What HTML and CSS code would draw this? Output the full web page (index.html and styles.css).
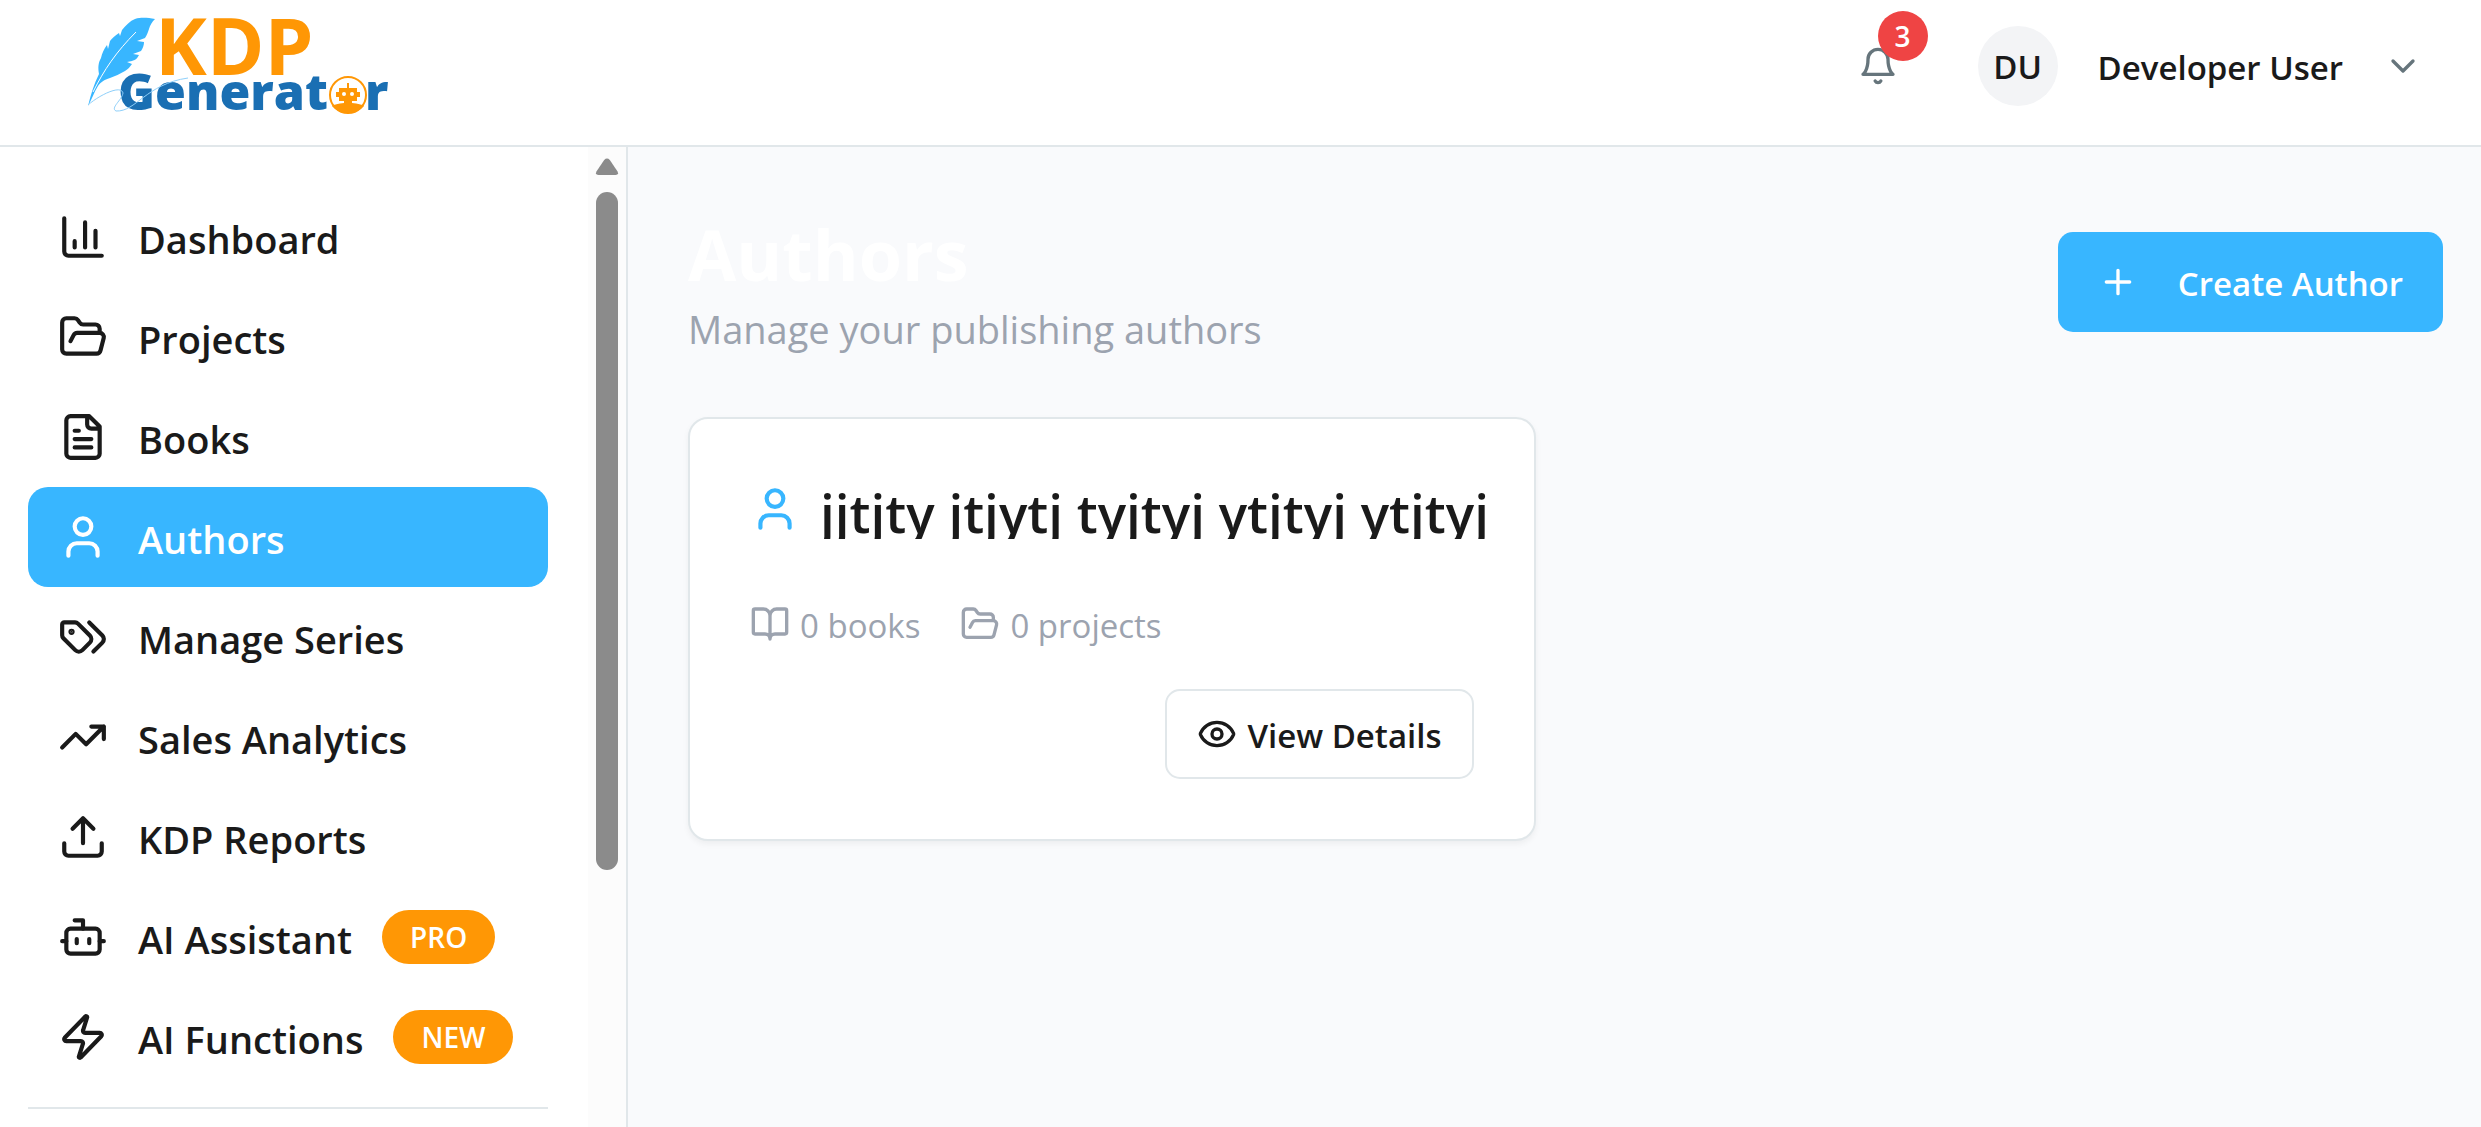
FILE: index.html
```html
<!DOCTYPE html>
<html lang="en">
<head>
<meta charset="utf-8">
<title>Authors - KDP Generator</title>
<link rel="stylesheet" href="styles.css">
</head>
<body>
<svg class="sprite" aria-hidden="true">
  <symbol id="i-chart" viewBox="0 0 24 24"><path d="M3 3v16a2 2 0 0 0 2 2h16M18 17V9M13 17V5M8 17v-3"/></symbol>
  <symbol id="i-folder" viewBox="0 0 24 24"><path d="m6 14 1.5-2.9A2 2 0 0 1 9.24 10H20a2 2 0 0 1 1.94 2.5l-1.54 6a2 2 0 0 1-1.95 1.5H4a2 2 0 0 1-2-2V5a2 2 0 0 1 2-2h3.9a2 2 0 0 1 1.69.9l.81 1.2a2 2 0 0 0 1.67.9H18a2 2 0 0 1 2 2v2"/></symbol>
  <symbol id="i-file" viewBox="0 0 24 24"><path d="M15 2H6a2 2 0 0 0-2 2v16a2 2 0 0 0 2 2h12a2 2 0 0 0 2-2V7ZM14 2v4a2 2 0 0 0 2 2h4M10 9H8M16 13H8M16 17H8"/></symbol>
  <symbol id="i-user" viewBox="0 0 24 24"><path d="M19 21v-2a4 4 0 0 0-4-4H9a4 4 0 0 0-4 4v2"/><circle cx="12" cy="7" r="4"/></symbol>
  <symbol id="i-tags" viewBox="0 0 24 24"><path d="m15 5 6.3 6.3a2.4 2.4 0 0 1 0 3.4L17 19M9.586 5.586A2 2 0 0 0 8.172 5H3a1 1 0 0 0-1 1v5.172a2 2 0 0 0 .586 1.414L8.29 18.29a2.426 2.426 0 0 0 3.42 0l3.58-3.58a2.426 2.426 0 0 0 0-3.42z"/><circle cx="6.5" cy="9.5" r=".5" fill="currentColor"/></symbol>
  <symbol id="i-trend" viewBox="0 0 24 24"><path d="M22 7l-8.500 8.500-5-5L2 17M16 7h6v6"/></symbol>
  <symbol id="i-upload" viewBox="0 0 24 24"><path d="M21 15v4a2 2 0 0 1-2 2H5a2 2 0 0 1-2-2v-4M17 8l-5-5-5 5M12 3v12"/></symbol>
  <symbol id="i-bot" viewBox="0 0 24 24"><path d="M12 8V4H8M2 14h2M20 14h2M15 13v2M9 13v2"/><rect x="4" y="8" width="16" height="12" rx="2"/></symbol>
  <symbol id="i-zap" viewBox="0 0 24 24"><path d="M4 14a1 1 0 0 1-.78-1.63l9.9-10.2a.5.5 0 0 1 .86.46l-1.92 6.02A1 1 0 0 0 13 10h7a1 1 0 0 1 .78 1.63l-9.900 10.2a.5.5 0 0 1-.86-.46l1.92-6.02A1 1 0 0 0 11 14z"/></symbol>
  <symbol id="i-bell" viewBox="0 0 24 24"><path d="M6 8a6 6 0 0 1 12 0c0 7 3 9 3 9H3s3-2 3-9M10.300 21a1.940 1.940 0 0 0 3.400 0"/></symbol>
  <symbol id="i-chevron" viewBox="0 0 24 24"><path d="m6 9 6 6 6-6"/></symbol>
  <symbol id="i-plus" viewBox="0 0 24 24"><path d="M5 12h14M12 5v14"/></symbol>
  <symbol id="i-book" viewBox="0 0 24 24"><path d="M12 7v14M3 18a1 1 0 0 1-1-1V4a1 1 0 0 1 1-1h5a4 4 0 0 1 4 4 4 4 0 0 1 4-4h5a1 1 0 0 1 1 1v13a1 1 0 0 1-1 1h-6a3 3 0 0 0-3 3 3 3 0 0 0-3-3z"/></symbol>
  <symbol id="i-eye" viewBox="0 0 24 24"><path d="M2.062 12.348a1 1 0 0 1 0-.696 10.750 10.750 0 0 1 19.876 0 1 1 0 0 1 0 .696 10.750 10.750 0 0 1-19.876 0"/><circle cx="12" cy="12" r="3"/></symbol>
</svg>

<div class="app">
  <header class="topbar">
    <a class="brand" href="#" aria-label="KDP Generator">
      <svg class="logo" viewBox="0 0 310 108" role="img" aria-label="KDP Generator">
        <path class="logo-feather" d="M4 94C7 82 10 72 15 62C14 56 14 51 17 46C18 41 20 37 23 33L24 37L26 29C28 26 31 24 35 21L36 24L38 18C42 13 46 9 51 7C58 5 64 6 71 7C68 10 66 13 65 17C64 20 63 23 61 26L53 29L60 30C60 33 59 36 57 39L49 42L55 43C53 47 51 48 48 49L43 50L48 52C46 55 44 57 41 59C36 62 31 64 26 66C20 68 17 70 14 74C10 80 8 87 4 94Z"/>
        <path class="logo-quill" d="M9 80C20 58 32 40 52 20"/>
        <text class="logo-kdp" x="71" y="63">KDP</text>
        <text class="logo-gen" x="34" y="98">Generat</text>
        <text class="logo-gen" x="281" y="98">r</text>
        <path class="logo-swirl" d="M4 93C14 84 37 72 39 81C38 88 26 96 32 99C52 100 62 72 104 66"/>
        <circle class="logo-ring" cx="264" cy="83" r="18"/>
        <path class="logo-bot" d="M263 71h2v5h8v4h3v5h-3v4h-5v2q9 1 12 3q-6 7-16 7t-16-7q3-2 12-3v-2h-5v-4h-3v-5h3v-4h8z"/>
        <circle class="logo-eye" cx="260" cy="82" r="2"/><circle class="logo-eye" cx="268" cy="82" r="2"/>
      </svg>
    </a>
    <div class="account">
      <button class="bell" type="button" aria-label="Notifications"><svg class="icon-sm"><use href="#i-bell"/></svg><span class="count">3</span></button>
      <button class="profile" type="button"><span class="avatar">DU</span><span class="label">Developer User</span><svg class="icon-sm muted"><use href="#i-chevron"/></svg></button>
    </div>
  </header>

  <div class="body">
    <aside class="sidebar">
      <nav class="menu">
        <a class="item" href="#"><svg class="icon"><use href="#i-chart"/></svg><span class="label">Dashboard</span></a>
        <a class="item" href="#"><svg class="icon"><use href="#i-folder"/></svg><span class="label">Projects</span></a>
        <a class="item" href="#"><svg class="icon"><use href="#i-file"/></svg><span class="label">Books</span></a>
        <a class="item active" href="#" aria-current="page"><svg class="icon"><use href="#i-user"/></svg><span class="label">Authors</span></a>
        <a class="item" href="#"><svg class="icon"><use href="#i-tags"/></svg><span class="label">Manage Series</span></a>
        <a class="item" href="#"><svg class="icon"><use href="#i-trend"/></svg><span class="label">Sales Analytics</span></a>
        <a class="item" href="#"><svg class="icon"><use href="#i-upload"/></svg><span class="label">KDP Reports</span></a>
        <a class="item" href="#"><svg class="icon"><use href="#i-bot"/></svg><span class="label">AI Assistant</span><span class="tag">PRO</span></a>
        <a class="item" href="#"><svg class="icon"><use href="#i-zap"/></svg><span class="label">AI Functions</span><span class="tag">NEW</span></a>
        <hr class="rule">
      </nav>
      <div class="scrollbar" aria-hidden="true">
        <svg class="arrow" viewBox="0 0 24 18"><path d="M9 2q3-3 6 0l8 12q2 4-2 4H3q-4 0-2-4z"/></svg>
        <div class="thumb"></div>
      </div>
    </aside>

    <main class="main">
      <div class="page-head">
        <div>
          <h1 class="title">Authors</h1>
          <p class="subtitle">Manage your publishing authors</p>
        </div>
        <button class="create" type="button"><svg class="icon-sm"><use href="#i-plus"/></svg><span class="label">Create Author</span></button>
      </div>
      <div class="cards">
        <article class="card">
          <div class="card-head"><svg class="icon accent"><use href="#i-user"/></svg><h2 class="name">jjtjty jtjytj tyjtyj ytjtyj ytjtyj</h2></div>
          <div class="stats">
            <span class="stat"><svg class="icon-sm"><use href="#i-book"/></svg><span class="label">0 books</span></span>
            <span class="stat"><svg class="icon-sm"><use href="#i-folder"/></svg><span class="label">0 projects</span></span>
          </div>
          <button class="details" type="button"><svg class="icon-sm"><use href="#i-eye"/></svg><span class="label">View Details</span></button>
        </article>
      </div>
    </main>
  </div>
</div>
</body>
</html>
```
FILE: styles.css
```css
* { box-sizing: border-box; margin: 0; }

body {
  font-family: "Open Sans", sans-serif;
  font-size: 33px;
  line-height: 46px;
  color: #1a1a1a;
  background: #f9fafc;
}

a { color: inherit; text-decoration: none; }
button { font: inherit; color: inherit; border: 0; background: none; padding: 0; cursor: pointer; }

.sprite { position: absolute; width: 0; height: 0; }
.icon, .icon-sm {
  flex: none;
  fill: none;
  stroke: currentColor;
  stroke-width: 2;
  stroke-linecap: round;
  stroke-linejoin: round;
}
.icon { width: 50px; height: 50px; }
.icon-sm { width: 40px; height: 40px; }
.label { padding-top: 3px; white-space: nowrap; }
.muted { color: #66757c; }
.accent { color: #38b6ff; }

.app { display: flex; flex-direction: column; height: 100vh; overflow: hidden; }

/* Top bar */
.topbar {
  flex: none;
  display: flex;
  justify-content: space-between;
  align-items: center;
  padding: 12px 58px 25px 84px;
  background: #fff;
  border-bottom: 2px solid #e1e7ea;
}
.brand, .logo { display: block; }
.logo { width: 310px; height: 108px; overflow: visible; }
.logo-feather { fill: #38b6ff; }
.logo-quill { fill: none; stroke: #fff; stroke-width: 1; }
.logo-swirl { fill: none; stroke: #8fd0fa; stroke-width: 1; }
.logo-kdp { fill: #ff9705; font-size: 78px; font-weight: 700; }
.logo-gen { fill: #1a6fb3; font-size: 50px; font-weight: 800; }
.logo-ring { fill: #fff; stroke: #ff9705; stroke-width: 2; }
.logo-bot { fill: #ff9705; }
.logo-eye { fill: #fff; }

.account { display: flex; align-items: center; gap: 80px; }
.bell { position: relative; display: flex; color: #66757c; }
.count {
  position: absolute;
  left: 20px;
  bottom: 25px;
  width: 50px;
  border-radius: 25px;
  background: #ef4444;
  color: #fff;
  font-size: 28px;
  line-height: 50px;
  font-weight: 600;
  text-align: center;
}
.profile { display: flex; align-items: center; gap: 40px; font-weight: 600; }
.avatar { width: 80px; height: 80px; line-height: 82px; border-radius: 50%; background: #f3f4f6; text-align: center; }

.body { flex: 1; display: flex; min-height: 0; }

/* Sidebar */
.sidebar { flex: none; display: flex; width: 628px; background: #fff; border-right: 2px solid #e1e7ea; }
.menu { flex: 1; padding: 40px 40px 0 28px; overflow: hidden; }
.item {
  display: flex;
  align-items: center;
  gap: 30px;
  height: 100px;
  padding: 0 30px;
  border-radius: 20px;
  font-size: 38px;
  font-weight: 600;
}
.item.active { background: #38b6ff; color: #fff; }
.tag {
  padding: 0 28px;
  line-height: 54px;
  border-radius: 27px;
  background: #ff9705;
  color: #fff;
  font-size: 28px;
}
.rule { height: 2px; margin-top: 20px; border: 0; background: #e1e7ea; }
.scrollbar { display: flex; flex-direction: column; align-items: center; gap: 17px; width: 38px; padding-top: 11px; background: #fcfcfc; }
.arrow { width: 24px; height: 17px; fill: #8b8b8b; }
.thumb { width: 22px; height: 70%; border-radius: 11px; background: #8b8b8b; }

/* Main */
.main { flex: 1; min-width: 0; padding: 60px 38px 60px 60px; }
.page-head { display: flex; justify-content: space-between; align-items: center; margin-bottom: 60px; }
.title { color: #fff; font-size: 70px; line-height: 94px; font-weight: 700; }
.subtitle { color: #9ca3af; font-size: 38px; line-height: 56px; }
.create {
  display: flex;
  align-items: center;
  gap: 40px;
  height: 100px;
  padding: 0 40px;
  border-radius: 15px;
  background: #38b6ff;
  color: #fff;
  font-weight: 600;
}
.cards { display: grid; grid-template-columns: 1fr 1fr; gap: 60px; }
.card {
  display: flex;
  flex-direction: column;
  min-width: 0;
  padding: 60px;
  border: 2px solid #e1e7ea;
  border-radius: 20px;
  background: #fff;
  box-shadow: 0 3px 6px rgba(0, 0, 0, 0.05);
}
.card-head { display: flex; align-items: center; gap: 20px; margin-bottom: 60px; }
.name { flex: none; height: 60px; overflow: hidden; white-space: nowrap; font-size: 53px; line-height: 68px; font-weight: 600; }
.stats { display: flex; gap: 40px; height: 50px; margin-bottom: 40px; color: #9ca3af; }
.stat { display: flex; align-items: center; gap: 10px; }
.details {
  display: flex;
  align-items: center;
  align-self: flex-end;
  gap: 10px;
  height: 90px;
  padding: 0 30px;
  border: 2px solid #e1e7ea;
  border-radius: 15px;
  font-weight: 600;
}
```
